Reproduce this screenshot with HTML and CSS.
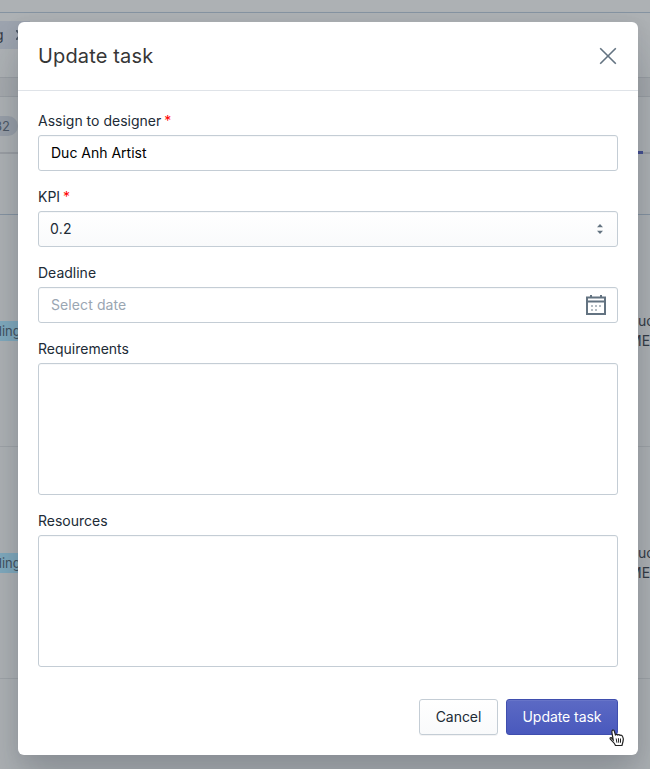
FILE: index.html
```html
<!DOCTYPE html>
<html lang="en">
<head>
<meta charset="utf-8">
<title>Update task</title>
<link rel="stylesheet" href="styles.css">
</head>
<body>
<main class="page">
  <div class="topbar"></div>
  <div class="filters"><span class="chip">g<svg width="9" height="10" viewBox="0 0 9 10"><path d="M0 0l9 10M9 0L0 10"/></svg></span></div>
  <div class="band"></div>
  <div class="tabs"><span class="count">32</span><span class="active-tab"></span></div>
  <div class="table-head"></div>
  <div class="row"><span class="status">ding</span><span class="designer">uc<br><span class="team">ME</span></span></div>
  <div class="row"><span class="status">ding</span><span class="designer">uc<br><span class="team">ME</span></span></div>
  <div class="row-end"></div>
</main>
<div class="overlay">
  <section class="modal" role="dialog" aria-label="Update task">
    <header class="modal-header">
      <h2>Update task</h2>
      <svg class="close" width="18" height="18" viewBox="0 0 18 18"><path d="M1.2 1.2l15.6 15.6M16.8 1.2L1.2 16.8"/></svg>
    </header>
    <form class="form">
      <div class="field"><span class="label">Assign to designer<b>*</b></span><div class="control value">Duc Anh Artist</div></div>
      <div class="field"><span class="label">KPI<b>*</b></span>
        <div class="control select">0.2
          <svg class="arrows" width="6" height="10" viewBox="0 0 6 10"><path d="M3 0l3 3.3H0zM3 10l3-3.3H0z"/></svg>
        </div></div>
      <div class="field"><span class="label">Deadline</span>
        <div class="control date">Select date
          <svg class="calendar" width="20" height="20" viewBox="0 0 20 20">
            <path class="frame" d="M1 2.5h18v16.5H1zM1 6.5h18M5 0v2M15 0v2"/>
            <path class="days" d="M5 11h2M9 11h2M13 11h2M5 15h2M9 15h2"/>
          </svg>
        </div></div>
      <div class="field"><span class="label">Requirements</span><div class="control area"></div></div>
      <div class="field"><span class="label">Resources</span><div class="control area"></div></div>
    </form>
    <footer class="actions"><span class="button">Cancel</span><span class="button primary">Update task</span></footer>
  </section>
</div>
<svg class="cursor" width="16" height="18" viewBox="0 0 16 18"><path d="M4.2 10.8L3 4.2Q2.5 1.8 3.6 1.1Q5 .6 5.4 2.3L6.4 5.8Q7.4 4.7 8.7 6Q9.8 5 11 6.4Q12.7 5.7 13.6 7.5Q14.8 9.5 14 12.5L13 16.5H6.5Q5.8 14.5 3.7 12.6L1.2 10Q.6 8.5 2.2 8.6Z"/><path class="fingers" d="M7.2 9.5l.7 4.2M9.4 9.2l.3 4.5M11.5 9.5v4.2"/></svg>
</body>
</html>
```
FILE: styles.css
```css
* { box-sizing: border-box; }
body {
  margin: 0;
  height: 769px;
  overflow: hidden;
  font: 400 14px/20px Inter, sans-serif;
  letter-spacing: 0;
  color: #212b36;
}
.page { height: 769px; background: #adb1b4; color: #343b45; }
.topbar { height: 13px; border-bottom: 1px solid #8593a1; }
.filters { height: 65px; padding-top: 8px; border-bottom: 1px solid #999ea3; }
.chip {
  display: flex;
  align-items: center;
  gap: 12px;
  width: 35px;
  height: 28px;
  margin-left: -5px;
  background: #9ca3ae;
}
.chip svg { flex: none; fill: none; stroke: #4d5866; stroke-width: 2; }
.band { height: 19px; background: #a5a9ad; border-bottom: 1px solid #999ea3; }
.tabs {
  display: flex;
  justify-content: space-between;
  height: 57px;
  padding-top: 19px;
  border-bottom: 2px solid #9a9ea3;
}
.count {
  width: 27px;
  height: 20px;
  margin-left: -9px;
  padding-right: 8px;
  border-radius: 10px;
  background: #989fa8;
  color: #4d5865;
  font-size: 13px;
  text-align: right;
}
.active-tab { width: 20px; height: 3px; margin: 35px 7px 0 0; background: #434e91; }
.table-head { height: 61px; border-bottom: 1px solid #8593a1; }
.row {
  display: flex;
  justify-content: space-between;
  height: 232px;
  padding-top: 96px;
  border-bottom: 1px solid #9ea3a7;
}
.status {
  width: 40px;
  height: 20px;
  margin: 10px 0 0 -8px;
  padding-left: 2px;
  background: #7fa9bd;
  color: #43525f;
  font-size: 13px;
}
.designer { width: 15px; margin-right: -1px; text-indent: 2px; white-space: nowrap; }
.team { margin-left: -7px; }
.overlay { position: absolute; inset: 0; padding: 22px 12px 14px 18px; overflow: hidden; }
.modal {
  display: flex;
  flex-direction: column;
  height: 733px;
  border-radius: 6px;
  background: #fff;
  box-shadow: 0 31px 41px rgba(32, 42, 53, .2), 0 2px 16px rgba(32, 42, 54, .08);
}
.modal-header {
  display: flex;
  align-items: center;
  justify-content: space-between;
  height: 69px;
  padding: 0 21px 0 20px;
  border-bottom: 1px solid #dfe3e8;
}
h2 { margin: 0; color: #363636; font-size: 20px; line-height: 28px; font-weight: 400; letter-spacing: .15px; }
.close { fill: none; stroke: #637381; stroke-width: 1.6; }
.form { display: flex; flex-direction: column; gap: 16px; padding: 20px 20px 0; }
.label { display: block; margin-bottom: 4px; }
.label b { margin-left: 3px; color: #f00; font-weight: 400; }
.control {
  display: flex;
  align-items: center;
  justify-content: space-between;
  height: 36px;
  padding: 0 11px 0 12px;
  border: 1px solid #c4cdd5;
  border-radius: 3px;
  background: #fff;
  box-shadow: inset 0 1px 0 rgba(99, 115, 129, .05);
}
.value { color: #000; }
.select { padding: 0 14px 0 11px; letter-spacing: .3px; background: linear-gradient(#fff, #f9fafb); }
.arrows { fill: #637381; }
.date { color: #9aa6b2; letter-spacing: .1px; }
.calendar { fill: none; stroke: #637381; stroke-width: 2; }
.calendar .days { stroke: #b5bdc4; }
.area { height: 132px; }
.actions { display: flex; justify-content: flex-end; gap: 8px; margin: auto 20px 20px; }
.button {
  width: 79px;
  height: 36px;
  border: 1px solid #c4cdd5;
  border-radius: 3px;
  background: linear-gradient(#fff, #f9fafb);
  box-shadow: 0 1px 0 rgba(22, 29, 37, .05);
  line-height: 34px;
  letter-spacing: -.05px;
  text-align: center;
}
.primary {
  width: 112px;
  border-color: #3f4eae;
  background: linear-gradient(#5c6ac4, #4959bd);
  box-shadow: inset 0 1px 0 #6774c8;
  color: #fff;
}
.cursor { position: absolute; left: 609px; top: 729px; fill: #fff; stroke: #222; stroke-width: 1.2; }
.cursor .fingers { fill: none; stroke-width: 1; }
```
